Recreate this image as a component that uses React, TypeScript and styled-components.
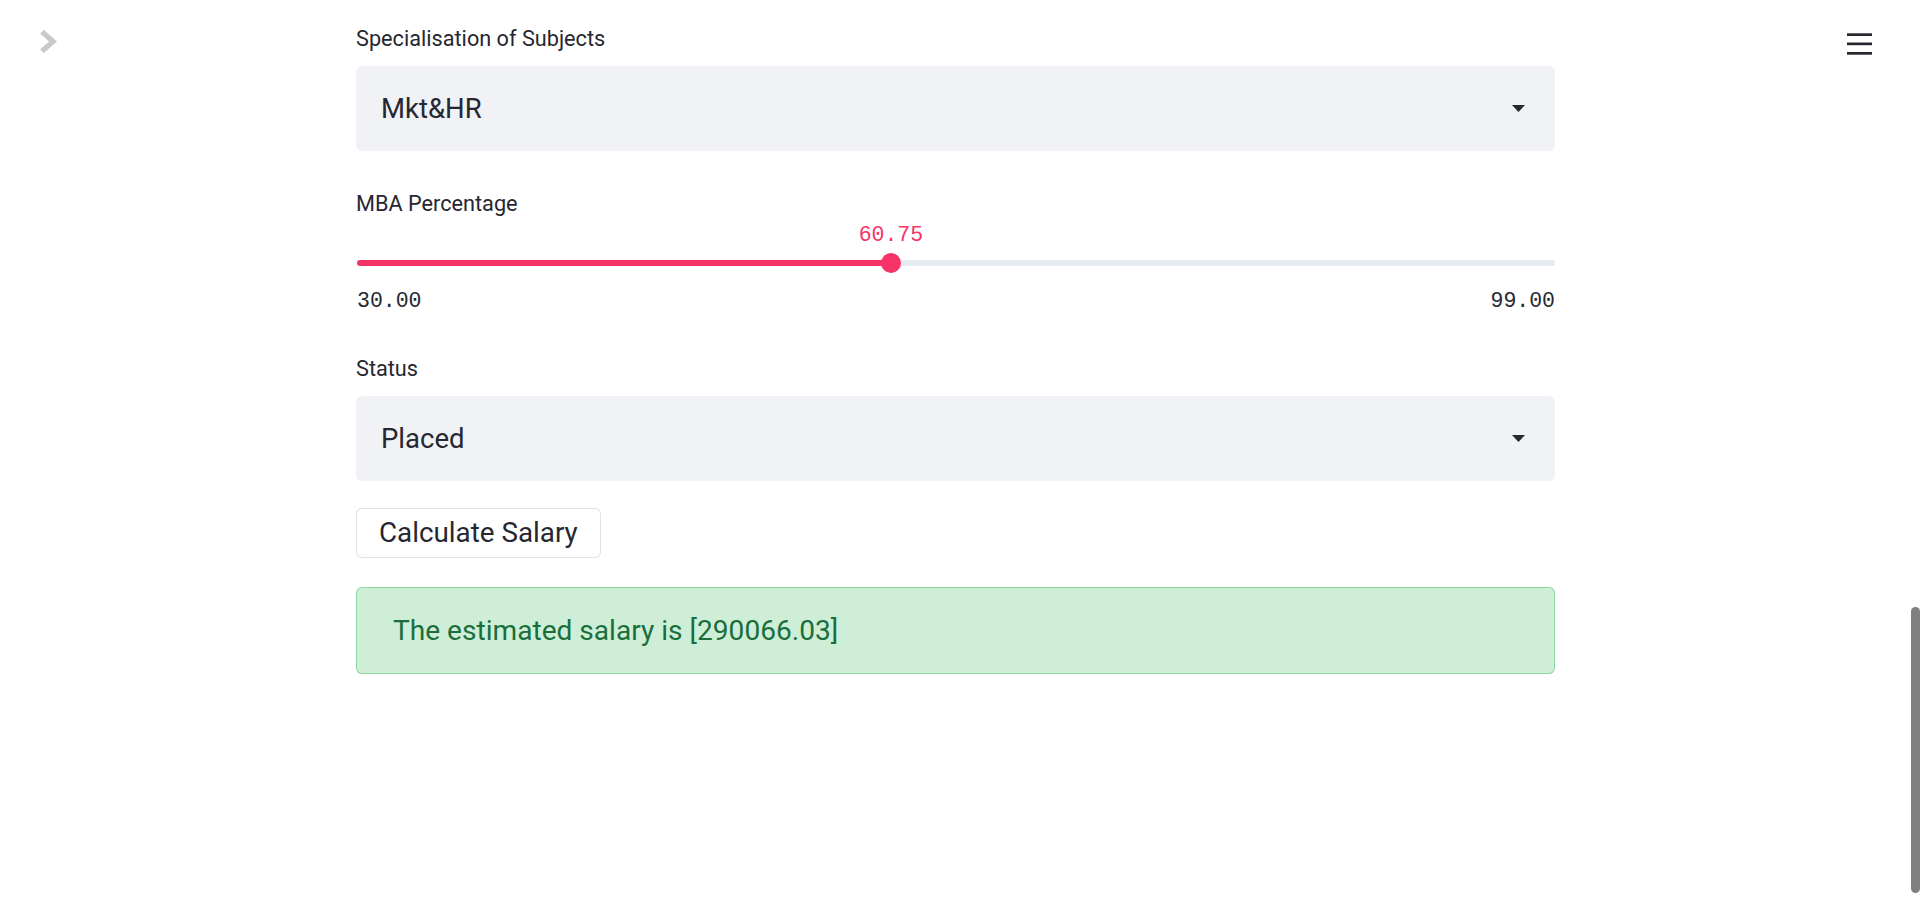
import React from "react";
import styled, { createGlobalStyle } from "styled-components";

const GlobalStyle = createGlobalStyle`
  html, body {
    margin: 0;
    padding: 0;
    background: #ffffff;
    overflow: hidden;
  }
  body {
    font-family: Roboto, "Noto Sans", sans-serif;
    color: #262730;
    -webkit-font-smoothing: antialiased;
  }
`;

const Page = styled.div`
  display: grid;
  grid-template-columns: 356px 1199px 1fr;
  align-items: start;
  width: 1920px;
  height: 920px;
`;

const SideControl = styled.div`
  padding: 30px 0 0 40px;
  display: flex;
`;

const MenuControl = styled.div`
  justify-self: end;
  margin: 33px 48px 0 0;
  display: flex;
`;

const Main = styled.main`
  display: flex;
  flex-direction: column;
  padding-top: 26px;
`;

const Block = styled.div<{ $gap: number }>`
  display: flex;
  flex-direction: column;
  margin-top: ${(p) => p.$gap}px;
`;

const Label = styled.label<{ $flush?: boolean }>`
  font-size: 21.7px;
  line-height: 26px;
  height: 26px;
  color: #262730;
  margin-bottom: ${(p) => (p.$flush ? 0 : 14)}px;
`;

const SelectBox = styled.div`
  height: 85px;
  box-sizing: border-box;
  background: #f0f2f6;
  border-radius: 6px;
  display: flex;
  align-items: center;
  justify-content: space-between;
  padding: 0 30px 0 25px;
  font-size: 27.5px;
  line-height: 34px;
  color: #262730;
`;

const MonoText = styled.div<{ $color?: string }>`
  font-family: "Liberation Mono", "DejaVu Sans Mono", monospace;
  font-size: 21.5px;
  line-height: 22px;
  height: 22px;
  color: ${(p) => p.$color ?? "#262730"};
  white-space: nowrap;
`;

const ValueRow = styled.div`
  position: relative;
  height: 22px;
  margin-top: 7px;
  margin-left: 1px;
`;

const ValueLabel = styled(MonoText)`
  position: absolute;
  top: 0;
  transform: translateX(-50%);
`;

const TrackRow = styled.div`
  position: relative;
  height: 20px;
  margin-top: 7px;
  margin-left: 1px;
  display: flex;
  align-items: center;
`;

const Track = styled.div`
  flex: 1;
  height: 6px;
  border-radius: 3px;
  background: #e6eaf1;
`;

const TrackFill = styled.div`
  position: absolute;
  left: 0;
  top: 7px;
  height: 6px;
  border-radius: 3px;
  background: #f63366;
`;

const Thumb = styled.div`
  position: absolute;
  top: 0;
  width: 20px;
  height: 20px;
  border-radius: 50%;
  background: #f63366;
  transform: translateX(-50%);
`;

const TickRow = styled.div`
  display: flex;
  justify-content: space-between;
  margin-top: 17px;
  margin-left: 1px;
`;

const Button = styled.button`
  align-self: flex-start;
  height: 50px;
  box-sizing: border-box;
  padding: 0 22px;
  background: #ffffff;
  border: 1px solid rgba(38, 39, 48, 0.14);
  border-radius: 6px;
  font-family: Roboto, "Noto Sans", sans-serif;
  font-size: 27.8px;
  line-height: 34px;
  color: #262730;
  cursor: pointer;
`;

const Alert = styled.div`
  height: 87px;
  box-sizing: border-box;
  display: flex;
  align-items: center;
  padding: 0 36px;
  background: rgba(9, 171, 59, 0.2);
  border: 1px solid rgba(9, 171, 59, 0.35);
  border-radius: 6px;
  font-size: 28.1px;
  line-height: 34px;
  color: #1a6e3c;
`;

const ScrollThumb = styled.div`
  position: fixed;
  right: 0;
  top: 607px;
  width: 9px;
  height: 286px;
  border-radius: 5px;
  background: #808080;
`;

const Chevron = () => (
  <svg width="17" height="23" viewBox="0 0 15 23" preserveAspectRatio="none">
    <polygon points="3.5,0 15,11.5 3.5,23 0,19.5 8,11.5 0,3.5" fill="#c9c9cb" />
  </svg>
);

const Hamburger = () => (
  <svg width="25" height="22" viewBox="0 0 25 22">
    <rect x="0" y="0.3" width="25" height="2.7" fill="#262730" />
    <rect x="0" y="9.5" width="25" height="2.7" fill="#262730" />
    <rect x="0" y="19" width="25" height="2.7" fill="#262730" />
  </svg>
);

const Caret = () => (
  <svg width="13" height="7" viewBox="0 0 13 7">
    <polygon points="0,0 13,0 6.5,7" fill="#262730" />
  </svg>
);

const Select = ({ value }: { value: string }) => (
  <SelectBox>
    <span>{value}</span>
    <Caret />
  </SelectBox>
);

const Slider = ({ min, max, value }: { min: number; max: number; value: number }) => {
  const pct = ((value - min) / (max - min)) * 100;
  return (
    <>
      <ValueRow>
        <ValueLabel $color="#f63366" style={{ left: `${pct}%` }}>
          {value.toFixed(2)}
        </ValueLabel>
      </ValueRow>
      <TrackRow>
        <Track />
        <TrackFill style={{ width: `${pct}%` }} />
        <Thumb style={{ left: `${pct}%` }} />
      </TrackRow>
      <TickRow>
        <MonoText>{min.toFixed(2)}</MonoText>
        <MonoText>{max.toFixed(2)}</MonoText>
      </TickRow>
    </>
  );
};

export default function App() {
  return (
    <>
      <GlobalStyle />
      <Page>
        <SideControl>
          <Chevron />
        </SideControl>
        <Main>
          <Block $gap={0}>
            <Label>Specialisation of Subjects</Label>
            <Select value="Mkt&HR" />
          </Block>
          <Block $gap={40}>
            <Label $flush>MBA Percentage</Label>
            <Slider min={30} max={99} value={60.75} />
          </Block>
          <Block $gap={44}>
            <Label>Status</Label>
            <Select value="Placed" />
          </Block>
          <Block $gap={27}>
            <Button>Calculate Salary</Button>
          </Block>
          <Block $gap={29}>
            <Alert>The estimated salary is [290066.03]</Alert>
          </Block>
        </Main>
        <MenuControl>
          <Hamburger />
        </MenuControl>
      </Page>
      <ScrollThumb />
    </>
  );
}
